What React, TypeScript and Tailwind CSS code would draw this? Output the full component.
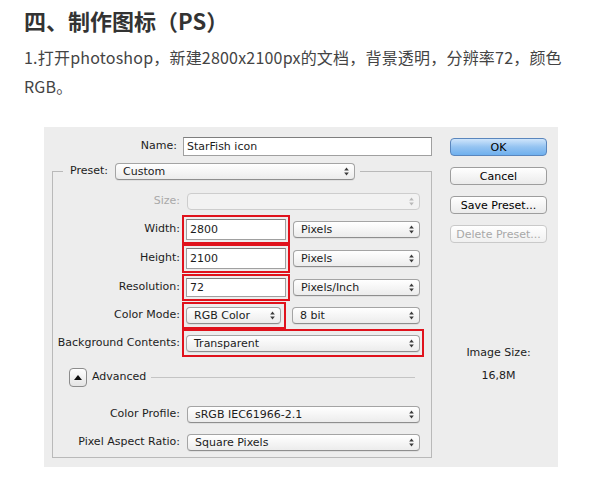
import React from "react";

const ui = "font-['DejaVu_Sans',sans-serif] text-[11px] text-[#1c1c1c]";

function Arrows({ dim }: { dim?: boolean }) {
  const c = dim ? "#b8b8b8" : "#3a3a3a";
  return (
    <svg width="5" height="9" viewBox="0 0 5 9" className="shrink-0">
      <path d="M2.5 0.5 L4.8 3.4 L0.2 3.4 Z" fill={c} />
      <path d="M2.5 8.5 L4.8 5.6 L0.2 5.6 Z" fill={c} />
    </svg>
  );
}

function Popup({ label, className = "", disabled }: { label?: string; className?: string; disabled?: boolean }) {
  return (
    <div
      className={
        "flex h-[17px] items-center justify-between rounded-[4px] border pl-[7px] pr-[5px] leading-none " +
        (disabled
          ? "border-[#cdcdcd] bg-[#f2f2f2]"
          : "border-[#a4a4a4] border-b-[#8e8e8e] bg-linear-to-b from-white to-[#ececec] shadow-[0_1px_0_rgba(0,0,0,0.06)]") +
        " " +
        className
      }
    >
      <span>{label}</span>
      <Arrows dim={disabled} />
    </div>
  );
}

function TextBox({ value }: { value: string }) {
  return (
    <div className="flex h-full w-full items-center border border-[#a0a0a0] border-t-[#7e7e7e] bg-white pl-[3px] leading-none">
      {value}
    </div>
  );
}

function Label({ children, dim }: { children: React.ReactNode; dim?: boolean }) {
  return (
    <div className={"w-[127px] shrink-0 text-right " + (dim ? "text-[#a9a9a9]" : "")}>{children}</div>
  );
}

function Btn({ children, primary, disabled }: { children: React.ReactNode; primary?: boolean; disabled?: boolean }) {
  return (
    <div
      className={
        "flex h-[18px] w-[97px] items-center justify-center rounded-[4px] border leading-none " +
        (primary
          ? "border-[#5a86bd] bg-linear-to-b from-[#cfe5fb] via-[#94c3f1] to-[#6fb0ee] text-black"
          : disabled
            ? "border-[#c9c9c9] bg-linear-to-b from-white to-[#f0f0f0] text-[#a8a8a8]"
            : "border-[#9d9d9d] bg-linear-to-b from-white to-[#ebebeb] text-black")
      }
    >
      {children}
    </div>
  );
}

export default function App() {
  return (
    <div className="h-[486px] w-[600px] overflow-hidden bg-white">
      <div className="pl-[24px] font-['Noto_Sans_CJK_SC',sans-serif]">
        <h1 className="text-[22px] font-bold leading-[40px] text-[#333]">四、制作图标（PS）</h1>
        <p className="mt-[3px] text-[16px] leading-[29px] tracking-[0.2px] text-[#444]">
          1.打开photoshop，新建2800x2100px的文档，背景透明，分辨率72，颜色
          <br />
          RGB。
        </p>
      </div>

      <div className={"ml-[44px] mt-[26px] flex h-[340px] w-[514px] bg-[#ededed] " + ui}>
        {/* form column */}
        <div className="w-[396px] px-[8px] pt-[10px]">
          <div className="flex h-[19px] items-center">
            <div className="w-[125px] text-right">Name:</div>
            <div className="ml-[6px] h-full flex-1">
              <TextBox value="StarFish icon" />
            </div>
          </div>

          <fieldset className="mt-[7px] border border-[#b9b9b9] pb-[6px]">
            <legend className="ml-[10px] flex items-center pl-[7px] pr-[5px]">
              <span>Preset:</span>
              <Popup label="Custom" className="ml-[7px] w-[240px]" />
            </legend>

            <div className="mt-[8px] flex h-[27px] items-center">
              <Label dim>Size:</Label>
              <Popup className="ml-[7px] w-[233px]" disabled />
            </div>

            <div className="flex h-[29px] items-center">
              <Label>Width:</Label>
              <div className="ml-[2px] h-full w-[108px] border-2 border-[#e0121c] p-[2px]">
                <TextBox value="2800" />
              </div>
              <Popup label="Pixels" className="ml-[3px] w-[127px]" />
            </div>

            <div className="flex h-[29px] items-center">
              <Label>Height:</Label>
              <div className="ml-[2px] h-full w-[108px] border-2 border-[#e0121c] p-[2px]">
                <TextBox value="2100" />
              </div>
              <Popup label="Pixels" className="ml-[3px] w-[127px]" />
            </div>

            <div className="mt-[1px] flex h-[27px] items-center">
              <Label>Resolution:</Label>
              <div className="ml-[2px] h-full w-[108px] border-2 border-[#e0121c] p-[2px]">
                <TextBox value="72" />
              </div>
              <Popup label="Pixels/Inch" className="ml-[3px] w-[127px]" />
            </div>

            <div className="mt-[1px] flex h-[27px] items-center">
              <Label>Color Mode:</Label>
              <div className="ml-[2px] flex h-full w-[104px] items-center border-2 border-[#e0121c] px-[2px]">
                <Popup label="RGB Color" className="w-[95px]" />
              </div>
              <Popup label="8 bit" className="ml-[6px] w-[128px]" />
            </div>

            <div className="flex h-[28px] items-center">
              <Label>Background Contents:</Label>
              <div className="ml-[2px] flex h-full w-[242px] items-center border-2 border-[#e0121c] px-[2px]">
                <Popup label="Transparent" className="w-full" />
              </div>
            </div>

            <div className="mt-[11px] flex h-[19px] items-center pl-[16px]">
              <div className="flex h-[19px] w-[18px] items-center justify-center rounded-[4px] border border-[#8c8c8c] bg-linear-to-b from-white to-[#e4e4e4]">
                <svg width="8" height="5" viewBox="0 0 8 5">
                  <path d="M4 0 L8 5 L0 5 Z" fill="#111" />
                </svg>
              </div>
              <span className="ml-[5px]">Advanced</span>
              <div className="ml-[5px] mr-[16px] h-px flex-1 bg-[#c4c4c4]" />
            </div>

            <div className="mt-[18px] flex h-[18px] items-center">
              <Label>Color Profile:</Label>
              <Popup label="sRGB IEC61966-2.1" className="ml-[7px] w-[233px]" />
            </div>

            <div className="mt-[10px] flex h-[18px] items-center">
              <Label>Pixel Aspect Ratio:</Label>
              <Popup label="Square Pixels" className="ml-[7px] w-[233px]" />
            </div>
          </fieldset>
        </div>

        {/* buttons column */}
        <div className="flex w-[118px] flex-col pl-[10px] pt-[11px]">
          <div className="flex flex-col gap-[11px]">
            <Btn primary>OK</Btn>
            <Btn>Cancel</Btn>
            <Btn>Save Preset...</Btn>
            <Btn disabled>Delete Preset...</Btn>
          </div>
          <div className="mt-[103px] w-[97px] text-center leading-[14px]">Image Size:</div>
          <div className="mt-[9px] w-[97px] text-center leading-[14px]">16,8M</div>
        </div>
      </div>
    </div>
  );
}
